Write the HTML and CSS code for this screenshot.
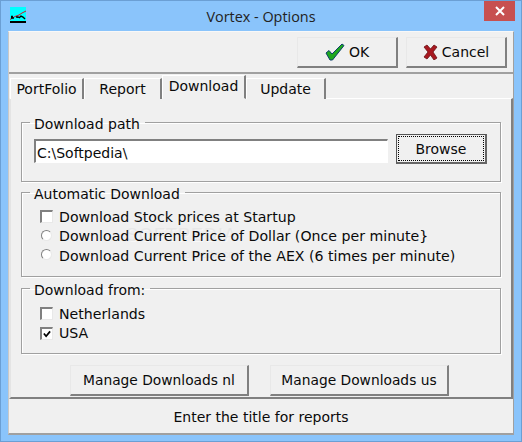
FILE: index.html
```html
<!DOCTYPE html>
<html lang="en">
<head>
<meta charset="utf-8">
<title>Vortex - Options</title>
<link rel="stylesheet" href="styles.css">
</head>
<body>
<div class="window">
  <header class="titlebar">
    <svg class="app-icon" width="16" height="16" viewBox="0 0 16 16">
      <rect width="16" height="16" fill="#00ffff"/>
      <rect y="14" width="16" height="2" fill="#000"/>
      <path d="M0 12.5L5 9.5 9 8 12 6 16 4" stroke="#e01020" stroke-width="1" fill="none"/>
      <path d="M1 9.5h2M1 11h3M6 10h2v1M9 11l2-2 2 1 2 2" stroke="#000" stroke-width="1.4" fill="none"/>
    </svg>
    <div class="title">Vortex - Options</div>
    <div class="close"><svg width="12" height="10" viewBox="0 0 12 10"><path d="M2 1l8 8M10 1l-8 8" stroke="#fff" stroke-width="2"/></svg></div>
  </header>
  <div class="client">
    <div class="toolbar">
      <button class="btn tool"><svg width="20" height="18" viewBox="0 0 20 18"><path d="M1 10l3-2.500 3 3.500L17 1l2 1.500L7.500 17h-2.500z" fill="#1fa81f" stroke="#0c3f6a" stroke-width="1"/></svg>OK</button>
      <button class="btn tool"><svg width="15" height="16" viewBox="0 0 15 16"><path d="M1 3l3-2 3.500 4L11 1l3 2-4 5 4 6-3 2-3.500-5L4 15l-3-2 4-5z" fill="#a81820" stroke="#6a1014" stroke-width=".8"/></svg>Cancel</button>
    </div>
    <nav class="tabs">
      <div class="tab tab-portfolio">PortFolio</div>
      <div class="tab tab-report">Report</div>
      <div class="tab tab-active">Download</div>
      <div class="tab tab-update">Update</div>
    </nav>
    <main class="panel">
      <div class="watermark">SOFTPEDIA<small>www.softpedia.com</small></div>
      <fieldset class="group group-path">
        <legend>Download path</legend>
        <div class="path-row">
          <div class="input">C:\Softpedia\</div>
          <button class="btn browse"><span>Browse</span></button>
        </div>
      </fieldset>
      <fieldset class="group group-auto">
        <legend>Automatic Download</legend>
        <div class="opt"><span class="check"></span>Download Stock prices at Startup</div>
        <div class="opt"><span class="radio"></span>Download Current Price of Dollar (Once per minute}</div>
        <div class="opt"><span class="radio"></span>Download Current Price of the AEX (6 times per minute)</div>
      </fieldset>
      <fieldset class="group group-from">
        <legend>Download from:</legend>
        <div class="opt"><span class="check"></span>Netherlands</div>
        <div class="opt"><span class="check checked"><svg width="8" height="8" viewBox="0 0 9 9"><path d="M1 4l2.500 3L8 1.500" stroke="#000" stroke-width="2" fill="none"/></svg></span>USA</div>
      </fieldset>
      <div class="manage">
        <button class="btn">Manage Downloads nl</button>
        <button class="btn">Manage Downloads us</button>
      </div>
    </main>
    <footer class="status">Enter the title for reports</footer>
  </div>
</div>
</body>
</html>
```
FILE: styles.css
```css
* { box-sizing: border-box; }
html, body { margin: 0; padding: 0; }
body {
  width: 522px;
  height: 442px;
  overflow: hidden;
  font-family: "DejaVu Sans", sans-serif;
  font-size: 13.5px;
  color: #0a0a0a;
}
.window {
  width: 522px;
  height: 442px;
  background: #8ac4fb;
  border: 1px solid #6b9fd4;
  display: flex;
  flex-direction: column;
  padding: 0 7px 6px;
}
.titlebar {
  height: 30px;
  flex: none;
  display: flex;
  align-items: flex-start;
  position: relative;
}
.app-icon { margin: 6px 0 0 2px; flex: none; }
.title {
  position: absolute;
  left: 0;
  right: 0;
  top: 6px;
  text-align: center;
  font-family: "Open Sans", sans-serif;
  font-size: 14.4px;
  line-height: 19px;
  color: #222;
}
.close {
  position: absolute;
  right: -1px;
  top: 0;
  width: 31px;
  height: 20px;
  background: #c75050;
  display: flex;
  align-items: center;
  justify-content: center;
}
.client {
  flex: 1;
  background: #f0f0f0;
  border: 1px solid #a0a0a0;
  border-width: 0 1px 2px 1px;
  border-top: 1px solid #f8f8f8;
  border-left-color: #c8c8c8;
  display: flex;
  flex-direction: column;
  min-height: 0;
}
.btn {
  font: inherit;
  color: inherit;
  background: #f0f0f0;
  border: 1px solid #fff;
  border-top-color: #e8e8e8;
  border-left-color: #e8e8e8;
  border-right: 2px solid #808080;
  border-bottom: 2px solid #808080;
  padding: 0;
  height: 31px;
  display: flex;
  align-items: center;
  justify-content: center;
}
.toolbar {
  height: 42px;
  flex: none;
  border-bottom: 2px solid #a0a0a0;
  display: flex;
  justify-content: flex-end;
  gap: 8px;
  padding: 5px 6px 0 0;
}
.tool { width: 101px; gap: 4px; font-size: 14px; }
.tabs {
  flex: none;
  height: 25px;
  display: flex;
  align-items: flex-end;
  padding-left: 1px;
  margin-bottom: -1px;
  position: relative;
  z-index: 1;
}
.tab {
  height: 21px;
  border-top: 1px solid #fff;
  border-left: 1px solid #fff;
  border-right: 2px solid #808080;
  text-align: center;
  line-height: 21px;
  font-size: 14px;
  background: #f0f0f0;
}
.tab-portfolio { width: 74px; }
.tab-report { width: 78px; }
.tab-active {
  width: 84px;
  height: 24px;
  line-height: 21px;
  border-bottom: 1px solid #f0f0f0;
}
.tab-update { width: 80px; }
.panel {
  flex: 1;
  min-height: 0;
  position: relative;
  border-top: 1px solid #fff;
  border-left: 2px solid #e4e4e4;
  border-right: 2px solid #808080;
  border-bottom: 2px solid #808080;
  padding: 12px 10px 0 10px;
  display: flex;
  flex-direction: column;
}
.watermark {
  position: absolute;
  left: 115px;
  top: 126px;
  font-family: "Liberation Sans", sans-serif;
  font-size: 18px;
  line-height: 20px;
  letter-spacing: 1px;
  color: #e7e7e7;
  text-shadow: 1px 1px 0 #f8f8f8;
  white-space: nowrap;
}
.watermark small {
  display: block;
  margin: 4px 0 0 30px;
  font-size: 10px;
  line-height: 11px;
  letter-spacing: 0;
  text-shadow: none;
}
.group {
  position: relative;
  margin: 0;
  padding: 0;
  border: 1px solid #a0a0a0;
  box-shadow: 1px 1px 0 #fff, inset 1px 1px 0 #fff;
  min-width: 0;
  flex: none;
}
.group legend {
  margin-left: 8px;
  padding: 4px 5px 0 4px;
  font-size: 14px;
  line-height: 18px;
}
.group-path { height: 71px; }
.group-auto { height: 96px; margin-top: -1px; padding-top: 4px; }
.group-from { height: 77px; padding-top: 5px; }
.path-row { display: flex; align-items: flex-start; gap: 8px; padding: 1px 0 0 12px; }
.input {
  width: 354px;
  height: 24px;
  margin-top: 5px;
  background: #fff;
  border: 1px solid #fff;
  border-top: 2px solid #808080;
  border-left: 2px solid #808080;
  font-size: 14px;
  line-height: 24px;
  padding-left: 1px;
}
.browse {
  width: 91px;
  height: 30px;
  border: 1px solid #555;
  border-right: 2px solid #666;
  border-bottom: 2px solid #666;
  padding: 1px;
  font-size: 14px;
}
.browse span {
  display: block;
  width: 100%;
  height: 100%;
  line-height: 25px;
  border: 1px dotted #000;
}
.opt {
  display: flex;
  align-items: center;
  height: 19.5px;
  margin-left: 18px;
  font-size: 14.15px;
  white-space: nowrap;
}
.check, .radio {
  flex: none;
  width: 13px;
  height: 13px;
  margin-right: 6px;
  background: #fff;
  border: 1px solid #808080;
  border-right-color: #e8e8e8;
  border-bottom-color: #e8e8e8;
  display: flex;
  align-items: center;
  justify-content: center;
}
.check { border-width: 2px 1px 1px 2px; }
.radio { border-radius: 50%; width: 11px; height: 11px; margin: 0 7px 2px 1px; }
.manage {
  display: flex;
  gap: 21px;
  margin-top: auto;
  padding-left: 49px;
  height: 32px;
}
.manage .btn { width: 179px; font-size: 13.8px; }
.status {
  height: 34px;
  flex: none;
  text-align: center;
  line-height: 36px;
  font-size: 14px;
}
```
